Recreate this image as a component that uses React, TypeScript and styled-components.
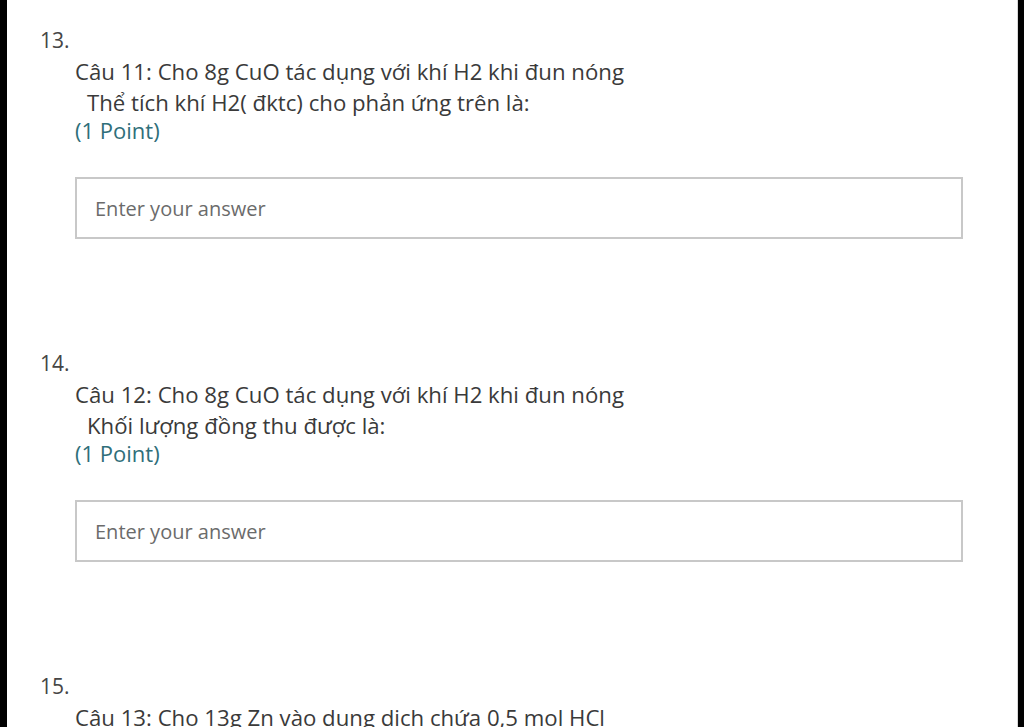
import React from "react";
import styled, { createGlobalStyle } from "styled-components";

const Global = createGlobalStyle`
  html, body { margin: 0; padding: 0; background: #000; }
  body { font-family: "Open Sans", "Noto Sans", sans-serif; }
`;

const Frame = styled.div`
  display: flex;
  height: 727px;
  overflow: hidden;
  padding: 0 6px 0 7px;
  box-sizing: border-box;
`;

const Page = styled.main`
  flex: 1;
  background: #fff;
  border-right: 1px solid #d8d8d8;
  padding: 25px 0 0 33px;
  display: flex;
  flex-direction: column;
  gap: 109px;
`;

const Question = styled.section`
  display: flex;
  flex-direction: column;
`;

const Number = styled.div`
  font-size: 21px;
  line-height: 31px;
  color: #454545;
`;

const Body = styled.div`
  padding-left: 35px;
  display: flex;
  flex-direction: column;
`;

const Line = styled.div<{ $indent?: boolean }>`
  font-size: 22.2px;
  line-height: 31px;
  color: #3a3a3a;
  padding-left: ${(p) => (p.$indent ? "12px" : "0")};
  white-space: nowrap;
`;

const Points = styled.div`
  font-size: 22px;
  line-height: 25px;
  color: #2f6f7a;
`;

const Answer = styled.input`
  margin-top: 34px;
  width: 888px;
  height: 62px;
  box-sizing: border-box;
  border: 2px solid #c8c8c8;
  padding: 0 18px;
  font-family: "Open Sans", "Noto Sans", sans-serif;
  font-size: 20px;
  color: #333;
  outline: none;
  &::placeholder { color: #6b6b6b; }
`;

type Q = { n: number; lines: string[]; input: boolean };

const questions: Q[] = [
  {
    n: 13,
    lines: ["Câu 11: Cho 8g CuO tác dụng với khí H2 khi đun nóng", "Thể tích khí H2( đktc) cho phản ứng trên là:"],
    input: true,
  },
  {
    n: 14,
    lines: ["Câu 12: Cho 8g CuO tác dụng với khí H2 khi đun nóng", "Khối lượng đồng thu được là:"],
    input: true,
  },
  {
    n: 15,
    lines: ["Câu 13: Cho 13g Zn vào dung dịch chứa 0,5 mol HCl"],
    input: false,
  },
];

export default function App() {
  return (
    <>
      <Global />
      <Frame>
        <Page>
          {questions.map((q) => (
            <Question key={q.n}>
              <Number>{q.n}.</Number>
              <Body>
                {q.lines.map((l, i) => (
                  <Line key={i} $indent={i > 0}>{l}</Line>
                ))}
                {q.input && <Points>(1 Point)</Points>}
                {q.input && <Answer placeholder="Enter your answer" />}
              </Body>
            </Question>
          ))}
        </Page>
      </Frame>
    </>
  );
}
